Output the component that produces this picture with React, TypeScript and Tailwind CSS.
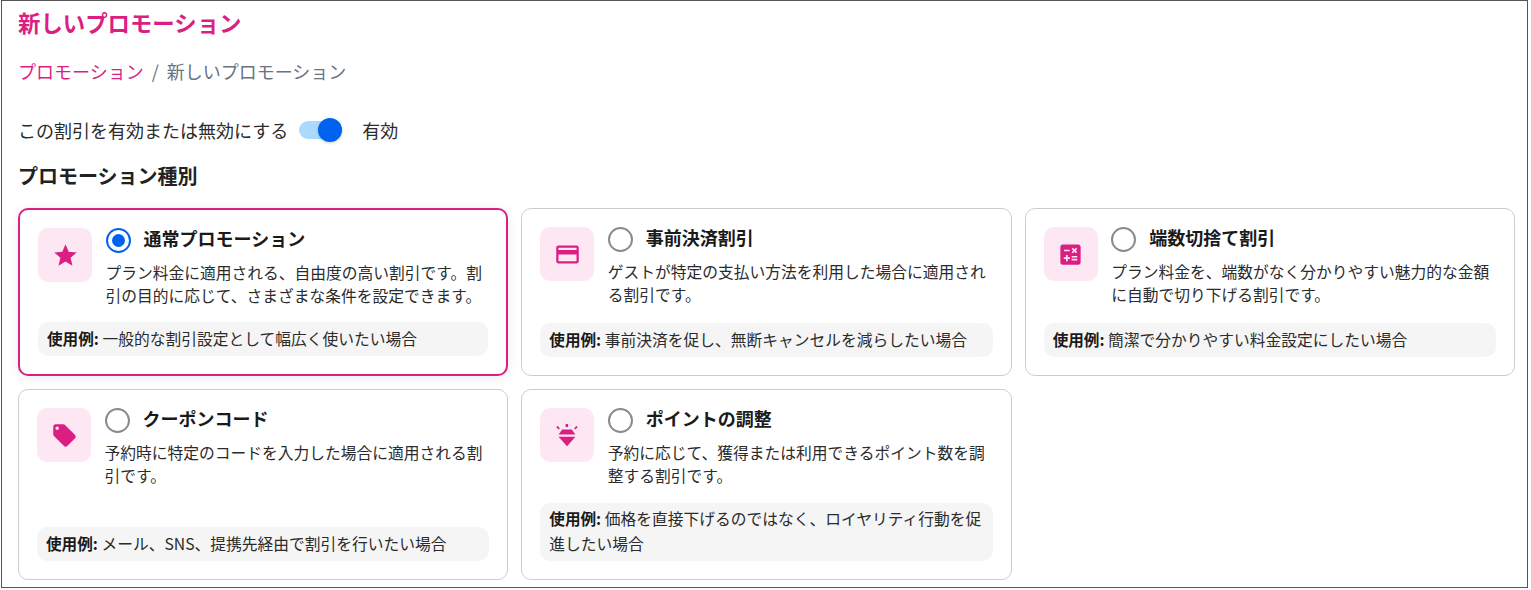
import type { ReactNode } from "react";
import { MdCalculate, MdLocalOffer, MdOutlineCreditCard, MdStar } from "react-icons/md";

type Promo = {
  title: string;
  desc: string;
  example: string;
  icon: ReactNode;
  selected?: boolean;
};

function DiamondIcon() {
  return (
    <svg width="22" height="23" viewBox="66 72 64 68" fill="currentColor" aria-hidden>
      <rect x="94" y="72" width="7" height="9" />
      <path d="M66 81l5-3 6 7-4 3zM130 81l-5-3-6 7 4 3z" />
      <path d="M84 88h28l11 15H73z" />
      <path d="M73 110h50l-25 28z" />
    </svg>
  );
}

const PROMOS: Promo[] = [
  {
    title: "通常プロモーション",
    desc: "プラン料金に適用される、自由度の高い割引です。割引の目的に応じて、さまざまな条件を設定できます。",
    example: "一般的な割引設定として幅広く使いたい場合",
    icon: <MdStar size={27} />,
    selected: true,
  },
  {
    title: "事前決済割引",
    desc: "ゲストが特定の支払い方法を利用した場合に適用される割引です。",
    example: "事前決済を促し、無断キャンセルを減らしたい場合",
    icon: <MdOutlineCreditCard size={27} />,
  },
  {
    title: "端数切捨て割引",
    desc: "プラン料金を、端数がなく分かりやすい魅力的な金額に自動で切り下げる割引です。",
    example: "簡潔で分かりやすい料金設定にしたい場合",
    icon: <MdCalculate size={27} />,
  },
  {
    title: "クーポンコード",
    desc: "予約時に特定のコードを入力した場合に適用される割引です。",
    example: "メール、SNS、提携先経由で割引を行いたい場合",
    icon: <MdLocalOffer size={27} />,
  },
  {
    title: "ポイントの調整",
    desc: "予約に応じて、獲得または利用できるポイント数を調整する割引です。",
    example: "価格を直接下げるのではなく、ロイヤリティ行動を促進したい場合",
    icon: <DiamondIcon />,
  },
];

function PromoCard({ promo }: { promo: Promo }) {
  return (
    <div
      className={
        promo.selected
          ? "flex flex-col rounded-[10px] border-2 border-[#db1f82] bg-white p-[18px] shadow-[0_2px_12px_rgba(0,0,0,0.08)]"
          : "flex flex-col rounded-[10px] border border-[#cccccc] bg-white p-[18px]"
      }
    >
      <div className="flex gap-[13.5px]">
        <div className="flex h-[54px] w-[54px] shrink-0 items-center justify-center rounded-[10px] bg-[#fce7f3] text-[#db1f82]">
          {promo.icon}
        </div>
        <div className="min-w-0 flex-1">
          <div className="flex h-[24px] items-start gap-[13px]">
            <span
              className={
                promo.selected
                  ? "flex h-[25px] w-[25px] shrink-0 items-center justify-center rounded-full border-2 border-[#0062f0]"
                  : "flex h-[25px] w-[25px] shrink-0 items-center justify-center rounded-full border-2 border-[#8a8a8a]"
              }
            >
              {promo.selected && <span className="h-[13px] w-[13px] rounded-full bg-[#0062f0]" />}
            </span>
            <span className="text-[18px] font-bold leading-[20px] text-[#1a1a1a]">{promo.title}</span>
          </div>
          <p className="mt-[10px] text-[15.75px] leading-[22.6px] text-[#2b2b2b]">{promo.desc}</p>
        </div>
      </div>
      <div className="mt-auto rounded-[10px] bg-[#f5f5f5] px-[9px] pb-[5px] pt-[3.5px] text-[15.75px] leading-[24.5px] text-[#2b2b2b]">
        <span className="text-[15.6px] font-bold text-[#1a1a1a]">使用例:</span> {promo.example}
      </div>
    </div>
  );
}

export default function App() {
  return (
    <div className="ml-px h-[588px] w-[1527px] overflow-hidden border border-[#555555] bg-white px-4 font-['Noto_Sans_CJK_JP',sans-serif] text-[#2b2b2b]">
      <h1 className="pt-[6px] text-[22.4px] font-bold leading-[30px] text-[#db1f82]">新しいプロモーション</h1>

      <div className="mt-[21px] flex items-center text-[18px] leading-[26px]">
        <span className="text-[#db1f82]">プロモーション</span>
        <span className="mx-[8px] text-[#6b7280]">/</span>
        <span className="text-[#6b7280]">新しいプロモーション</span>
      </div>

      <div className="mt-[33px] flex h-[26px] items-center text-[18px]">
        <span>この割引を有効または無効にする</span>
        <span className="relative ml-[11px] h-[18px] w-[43px] rounded-full bg-[#acdaff]">
          <span className="absolute right-0 top-[-3px] h-[24px] w-[24px] rounded-full bg-[#0062f0] shadow-[0_1px_3px_rgba(0,0,0,0.2)]" />
        </span>
        <span className="ml-[20px]">有効</span>
      </div>

      <h2 className="mt-[19px] text-[20px] font-bold leading-[28px] text-[#222222]">プロモーション種別</h2>

      <div className="mt-[18px] grid w-[1497px] grid-cols-3 grid-rows-[168px_191px] gap-x-[13px] gap-y-[13px]">
        {PROMOS.map((promo) => (
          <PromoCard key={promo.title} promo={promo} />
        ))}
      </div>
    </div>
  );
}
